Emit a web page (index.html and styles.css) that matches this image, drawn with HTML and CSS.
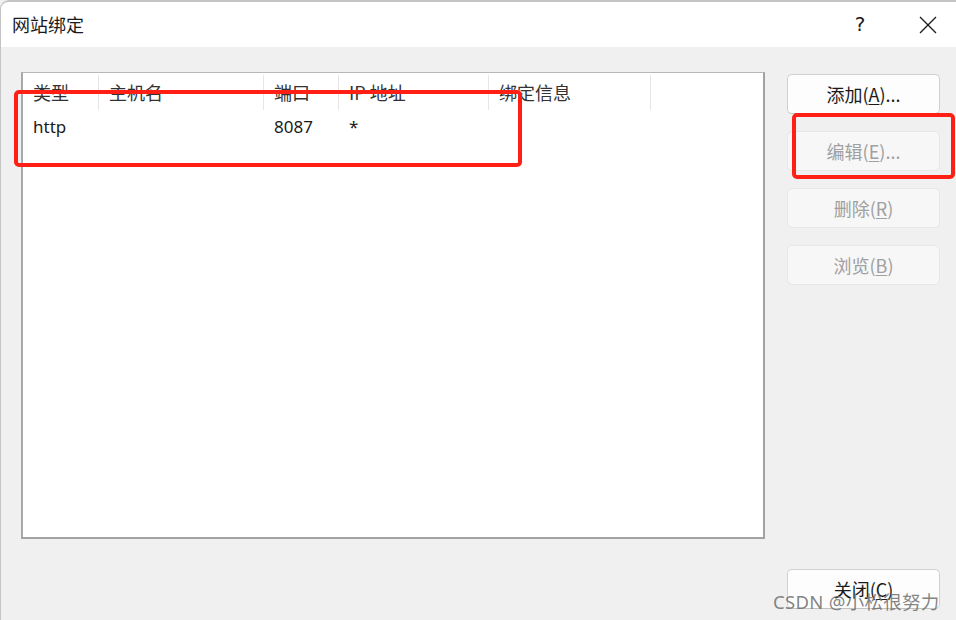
FILE: index.html
```html
<!DOCTYPE html>
<html lang="zh-CN">
<head>
  <meta charset="UTF-8">
  <title>网站绑定</title>
  <link rel="stylesheet" href="styles.css">
</head>
<body>

  <div class="window">
    <header class="titlebar">
      <div class="title">网站绑定</div>
      <div class="title-actions">
        <span class="help">?</span>
        <span class="close">
          <svg width="18" height="18" viewBox="0 0 18 18">
            <path d="M1 1 L17 17 M17 1 L1 17" stroke="#1a1a1a" stroke-width="1.3" fill="none"/>
          </svg>
        </span>
      </div>
    </header>

    <div class="dialog-body">
      <div class="binding-list">
        <div class="list-head">
          <div class="col">类型</div>
          <div class="col">主机名</div>
          <div class="col">端口</div>
          <div class="col">IP 地址</div>
          <div class="col">绑定信息</div>
          <div class="col last"></div>
        </div>
        <div class="list-row">
          <div class="col">http</div>
          <div class="col"></div>
          <div class="col">8087</div>
          <div class="col">*</div>
          <div class="col"></div>
          <div class="col"></div>
        </div>
      </div>

      <div class="side">
        <div class="side-buttons">
          <button class="btn">添加(<u>A</u>)...</button>
          <button class="btn" disabled>编辑(<u>E</u>)...</button>
          <button class="btn" disabled>删除(<u>R</u>)</button>
          <button class="btn" disabled>浏览(<u>B</u>)</button>
        </div>
        <button class="btn">关闭(<u>C</u>)</button>
      </div>
    </div>

    <!-- annotation marks drawn over the screenshot -->
    <div class="mark mark-row"></div>
    <div class="mark mark-edit"></div>
    <div class="watermark">CSDN @小松很努力</div>
  </div>

</body>
</html>
```

FILE: styles.css
```css
* {
  margin: 0;
  padding: 0;
  box-sizing: border-box;
}

body {
  background-color: #f0f0f0;
  color: #1a1a1a;
  font-family: "Noto Sans", "Noto Sans CJK SC", sans-serif;
  font-size: 17px;
  width: 956px;
  height: 620px;
  overflow: hidden;
}

.window {
  position: relative;
  height: 620px;
  border-top: 2px solid #c4c4c4;
  border-left: 1px solid #c4c4c4;
  border-top-left-radius: 9px;
  background-color: #f0f0f0;
  overflow: hidden;
}

.titlebar {
  height: 45px;
  background-color: #fff;
  display: flex;
  align-items: center;
  justify-content: space-between;
  padding-left: 11px;
}

.title {
  font-family: "Noto Sans CJK SC", sans-serif;
  font-size: 18px;
  margin-top: -1px;
}

.title-actions {
  display: flex;
  align-items: center;
  height: 100%;
}

.help {
  width: 46px;
  text-align: center;
  font-size: 20px;
  font-family: "DejaVu Sans", sans-serif;
  color: #1a1a1a;
  margin-right: 22px;
  margin-top: -2px;
}

.close {
  width: 46px;
  display: flex;
  justify-content: center;
  margin-right: 5px;
}

.dialog-body {
  display: flex;
  padding: 25px 16px 0 20px;
  height: 573px;
}

.binding-list {
  width: 745px;
  height: 467px;
  background-color: #fff;
  border: 1px solid #b8b8b8;
  border-right: 2px solid #a2a2a2;
  border-bottom: 2px solid #a2a2a2;
  border-left: 2px solid #a8a8a8;
}

.list-head,
.list-row {
  display: grid;
  grid-template-columns: 76px 165px 75px 150px 162px 1fr;
}

.list-head {
  height: 37px;
  padding-top: 2px;
}

.list-head .col {
  font-family: "Noto Sans CJK SC", sans-serif;
  font-size: 18px;
  border-right: 1px solid #e6e6e6;
  padding-left: 10px;
  line-height: 35px;
  color: #333;
}

.list-head .col.last {
  border-right: none;
}

.list-row .col {
  padding-left: 10px;
  line-height: 34px;
}

.side {
  margin-left: 22px;
  width: 153px;
  display: flex;
  flex-direction: column;
  justify-content: space-between;
  padding-top: 2px;
  padding-bottom: 11px;
}

.side-buttons {
  display: flex;
  flex-direction: column;
  gap: 17px;
}

.btn {
  width: 153px;
  height: 40px;
  background-color: #fdfdfd;
  border: 1px solid #d0d0d0;
  border-bottom-color: #c2c2c2;
  border-radius: 5px;
  font-family: "Noto Sans CJK SC", sans-serif;
  font-size: 18px;
  color: #1a1a1a;
}

.btn u {
  text-underline-offset: 2px;
}

.btn:disabled {
  background-color: #f7f7f7;
  border-color: #e7e7e7;
  color: #a0a0a0;
}

.mark {
  position: absolute;
  border: 4px solid #ff1f14;
  border-radius: 5px;
}

.mark-row {
  left: 13px;
  top: 88px;
  width: 508px;
  height: 77px;
}

.mark-edit {
  left: 791px;
  top: 111px;
  width: 163px;
  height: 66px;
}

.watermark {
  position: absolute;
  left: 772px;
  top: 586px;
  font-family: "Noto Sans", "Noto Sans CJK SC", sans-serif;
  font-size: 18.5px;
  color: rgba(110, 110, 110, 0.85);
  letter-spacing: 0.3px;
}
```
